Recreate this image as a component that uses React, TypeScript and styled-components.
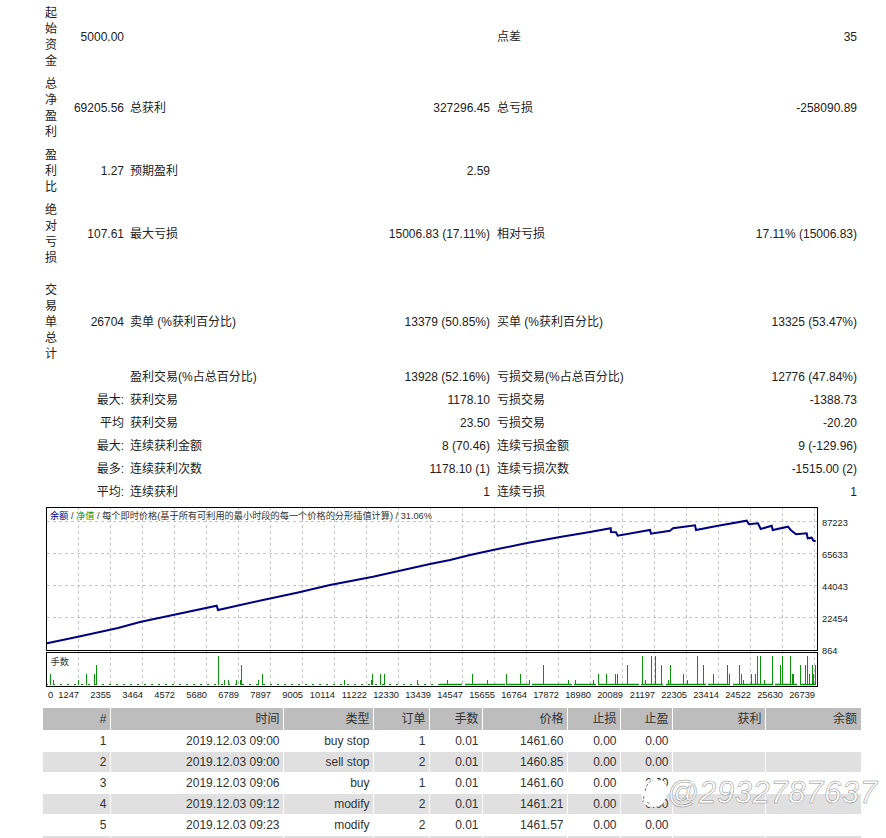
import React from 'react';
import styled, { createGlobalStyle } from 'styled-components';

const GlobalStyle = createGlobalStyle`
  html, body {
    margin: 0;
    padding: 0;
    height: 838px;
    overflow: hidden;
    background: #fff;
  }
`;

const Page = styled.div`
  position: relative;
  width: 886px;
  height: 838px;
  overflow: hidden;
  padding: 1px 0 0 43px;
  box-sizing: border-box;
  font-family: "Liberation Sans", "Noto Sans CJK SC", sans-serif;
  font-size: 12px;
  line-height: 16px;
  color: #222;
`;

// stats block on top
const StatsTable = styled.table`
  width: 818px;
  table-layout: fixed;
  border-collapse: collapse;
`;

const Caption = styled.td`
  padding: 4px 0 3px 2px;
  vertical-align: middle;
  word-break: break-all;
`;

const StatLabel = styled.td`
  padding: 4px 0 3px 3px;
  white-space: nowrap;
  vertical-align: middle;
`;

const StatValue = styled.td<{ $inset: number }>`
  padding: 4px ${p => p.$inset}px 3px 0;
  text-align: right;
  white-space: nowrap;
  vertical-align: middle;
`;

const Spacer = styled.tr`
  height: 9px;
`;

const ChartFrame = styled.div`
  margin: 2px 0 3px 3px;
  height: 200px;
`;

const ChartSvg = styled.svg`
  display: block;
  width: 840px;
  height: 200px;
`;

const AxisText = styled.text`
  font-family: "Liberation Sans", "Noto Sans CJK SC", sans-serif;
  font-size: 9.3px;
  fill: #222;
`;

const LegendText = styled.text`
  font-family: "Liberation Sans", "Noto Sans CJK SC", sans-serif;
  font-size: 9.2px;
  fill: #333;
`;

// deal list
const DealTable = styled.table`
  width: 818px;
  table-layout: fixed;
  border-collapse: collapse;
`;

const HeadCell = styled.th`
  height: 22px;
  padding: 0 3px 0 0;
  background: #bdbdbd;
  border-right: 1px solid #fff;
  border-bottom: 1px solid #fff;
  font-weight: normal;
  text-align: right;
  color: #333;
  &:last-child { border-right: 0; padding-right: 4px; }
`;

const DealRow = styled.tr<{ $shade: boolean }>`
  background: ${p => (p.$shade ? '#e0e0e0' : '#fff')};
`;

const DealCell = styled.td`
  height: 20px;
  padding: 0 3px 0 0;
  border-right: 1px solid #fff;
  border-bottom: 1px solid #fff;
  text-align: right;
  color: #333;
  &:last-child { border-right: 0; }
`;

const Watermark = styled.div`
  position: absolute;
  left: 641px;
  top: 776px;
  display: flex;
  align-items: center;
`;

const WatermarkText = styled.span`
  font-family: "Liberation Sans", sans-serif;
  font-size: 31px;
  line-height: 34px;
  font-style: italic;
  letter-spacing: 0.6px;
  color: #fff;
  -webkit-text-stroke: 0.5px #8a8a8a;
`;

const statCols = [20, 64, 140, 227, 140, 227];
const dealCols = [67, 173, 90, 56, 53, 85, 53, 52, 93, 96];
const dealHead = ['#', '时间', '类型', '订单', '手数', '价格', '止损', '止盈', '获利', '余额'];

const deals = [
  ['1', '2019.12.03 09:00', 'buy stop', '1', '0.01', '1461.60', '0.00', '0.00', '', ''],
  ['2', '2019.12.03 09:00', 'sell stop', '2', '0.01', '1460.85', '0.00', '0.00', '', ''],
  ['3', '2019.12.03 09:06', 'buy', '1', '0.01', '1461.60', '0.00', '0.00', '', ''],
  ['4', '2019.12.03 09:12', 'modify', '2', '0.01', '1461.21', '0.00', '0.00', '', ''],
  ['5', '2019.12.03 09:23', 'modify', '2', '0.01', '1461.57', '0.00', '0.00', '', ''],
  ['', '', '', '', '', '', '', '', '', ''],
];

const topRows = [
  ['起始资金', '5000.00', '', '', '点差', '35'],
  ['总净盈利', '69205.56', '总获利', '327296.45', '总亏损', '-258090.89'],
  ['盈利比', '1.27', '预期盈利', '2.59', '', ''],
  ['绝对亏损', '107.61', '最大亏损', '15006.83 (17.11%)', '相对亏损', '17.11% (15006.83)'],
];

const lowerRows = [
  ['', '盈利交易(%占总百分比)', '13928 (52.16%)', '亏损交易(%占总百分比)', '12776 (47.84%)'],
  ['最大:', '获利交易', '1178.10', '亏损交易', '-1388.73'],
  ['平均', '获利交易', '23.50', '亏损交易', '-20.20'],
  ['最大:', '连续获利金额', '8 (70.46)', '连续亏损金额', '9 (-129.96)'],
  ['最多:', '连续获利次数', '1178.10 (1)', '连续亏损次数', '-1515.00 (2)'],
  ['平均:', '连续获利', '1', '连续亏损', '1'],
];

// chart coordinates below are page x, and y relative to the svg (page y - 505)
const OX = 46;
const OY = 505;

const balance: [number, number][] = [
  [47, 643.3], [78, 636.7], [118, 628], [140, 622], [173, 615], [216.7, 605.7], [218, 610],
  [263, 600], [297, 592.7], [330, 585], [373, 576.7], [430, 564], [450, 560], [470, 555],
  [493, 550], [527, 543], [560, 537], [590, 532], [610.7, 528.3], [611, 532], [616, 532.3],
  [617.7, 535.7], [650, 530], [651, 533.7], [670, 530.7], [673, 528.3], [695, 525.3], [696, 530],
  [716.7, 526], [746.7, 520.7], [749, 524.3], [758, 523.3], [760.7, 529], [771.7, 525.7],
  [772.7, 530], [788, 526.7], [790.7, 530], [796, 534.3], [806.7, 533.3], [807.7, 538.3],
  [811.7, 537.7], [813.3, 540.7], [815.7, 541.3],
];

// [page x, top y of the bar]
const lots: [number, number][] = [
  [50, 674], [53, 680], [78, 680], [86, 674], [94, 674], [96, 665], [218, 656], [224, 680], [228, 680],
  [236, 680], [240, 680], [241, 665], [258, 680], [262, 674], [344, 680], [371, 680], [371.5, 674], [380, 674],
  [384, 674], [417, 680], [447, 680],
  [472, 674], [487, 680], [506, 674], [520, 674], [529, 680], [543, 665], [568, 680], [575, 680], [593, 680],
  [598, 674], [606, 674], [615, 674], [617, 674], [627, 665], [642, 656], [645, 680], [651, 656], [655, 656],
  [661, 665], [668, 680], [670, 665], [683, 674], [687, 680], [697, 656], [703, 665], [713, 674], [727, 665],
  [729, 674], [739, 665], [741, 674], [743, 680], [751, 674], [755, 674], [757, 656], [760, 656], [764, 680],
  [772, 656], [780, 665], [782, 656], [790, 656], [792, 674], [793, 674], [800, 665], [805, 665], [807, 656],
  [809, 674], [812, 665], [813, 674], [814.5, 665],
];

const xLabels = ['1247', '2355', '3464', '4572', '5680', '6789', '7897', '9005', '10114', '11222', '12330', '13439',
  '14547', '15655', '16764', '17872', '18980', '20089', '21197', '22305', '23414', '24522', '25630', '26739'];

const yLabels = [['87223', 525.5], ['65633', 557.5], ['44043', 589.5], ['22454', 621.5], ['864', 653.5]] as const;

const gridX = Array.from({ length: 24 }, (_, i) => 46.5 + 32 * (i + 1));
const gridY = [521.5, 553.5, 585.5, 617.5];

const EquityChart = () => {
  const y = (v: number) => v - OY;
  const x = (v: number) => v - OX;
  return (
    <ChartSvg viewBox="0 0 840 200">
      {gridX.map(g => (
        <line key={g} x1={x(g)} x2={x(g)} y1={2} y2={181} stroke="#c4c4c4" strokeDasharray="3 3" />
      ))}
      {gridY.map(g => (
        <line key={g} x1={1} x2={771} y1={y(g)} y2={y(g)} stroke="#c4c4c4" strokeDasharray="3 3" />
      ))}
      <polyline
        points={balance.map(([a, b]) => `${x(a)},${y(b)}`).join(' ')}
        fill="none"
        stroke="#000080"
        strokeWidth={2}
      />
      <line x1={x(46)} x2={x(440)} y1={179.5} y2={179.5} stroke="#0a8f0a" strokeDasharray="2 5" />
      <line x1={x(440)} x2={x(815)} y1={179.5} y2={179.5} stroke="#0a8f0a" strokeWidth={1.4} strokeDasharray="22 3 40 2" />
      {lots.map(([a, top], i) => (
        <line key={i} x1={Math.round(x(a)) + 0.5} x2={Math.round(x(a)) + 0.5} y1={y(top)} y2={180} stroke="#0a930a" />
      ))}
      <rect x={0.5} y={2.5} width={771} height={143} fill="none" stroke="#000" />
      <rect x={0.5} y={147.5} width={771} height={34} fill="none" stroke="#000" />
      <LegendText x={4} y={14}>
        <tspan fill="#000080">余额</tspan>
        <tspan> / </tspan>
        <tspan fill="#0a930a">净值</tspan>
        <tspan> / 每个即时价格(基于所有可利用的最小时段的每一个价格的分形插值计算) / 31.06%</tspan>
      </LegendText>
      <LegendText x={4.5} y={160}>手数</LegendText>
      {yLabels.map(([t, v]) => (
        <AxisText key={t} x={776} y={y(v)}>{t}</AxisText>
      ))}
      <AxisText x={2} y={192.5}>0</AxisText>
      {xLabels.map((t, i) => (
        <AxisText key={t} x={x(gridX[i]) + 0.5} y={192.5} textAnchor="end">{t}</AxisText>
      ))}
    </ChartSvg>
  );
};

const App = () => (
  <Page>
    <GlobalStyle />
    <StatsTable>
      <colgroup>
        {statCols.map((w, i) => <col key={i} width={w} />)}
      </colgroup>
      <tbody>
        {topRows.map(r => (
          <tr key={r[0]}>
            <Caption>{r[0]}</Caption>
            <StatValue $inset={3}>{r[1]}</StatValue>
            <StatLabel>{r[2]}</StatLabel>
            <StatValue $inset={4}>{r[3]}</StatValue>
            <StatLabel>{r[4]}</StatLabel>
            <StatValue $inset={4}>{r[5]}</StatValue>
          </tr>
        ))}
        <Spacer><td colSpan={6} /></Spacer>
        <tr>
          <Caption>交易单总计</Caption>
          <StatValue $inset={3}>26704</StatValue>
          <StatLabel>卖单 (%获利百分比)</StatLabel>
          <StatValue $inset={4}>13379 (50.85%)</StatValue>
          <StatLabel>买单 (%获利百分比)</StatLabel>
          <StatValue $inset={4}>13325 (53.47%)</StatValue>
        </tr>
        {lowerRows.map((r, i) => (
          <tr key={i}>
            <StatValue $inset={3} colSpan={2}>{r[0]}</StatValue>
            <StatLabel>{r[1]}</StatLabel>
            <StatValue $inset={4}>{r[2]}</StatValue>
            <StatLabel>{r[3]}</StatLabel>
            <StatValue $inset={4}>{r[4]}</StatValue>
          </tr>
        ))}
      </tbody>
    </StatsTable>
    <ChartFrame>
      <EquityChart />
    </ChartFrame>
    <DealTable>
      <colgroup>
        {dealCols.map((w, i) => <col key={i} width={w} />)}
      </colgroup>
      <thead>
        <tr>
          {dealHead.map(h => <HeadCell key={h}>{h}</HeadCell>)}
        </tr>
      </thead>
      <tbody>
        {deals.map((d, i) => (
          <DealRow key={i} $shade={i % 2 === 1}>
            {d.map((c, j) => <DealCell key={j}>{c}</DealCell>)}
          </DealRow>
        ))}
      </tbody>
    </DealTable>
    <Watermark>
      <svg width="26" height="30" viewBox="0 0 26 30">
        <path d="M5 3 C10 0 24 0 25 6 C27 14 25 24 20 27 C14 30 6 30 2 24 C-1 17 1 8 5 3 Z" fill="#fff" />
        <path d="M4 13 C5 8 8 3 12 2 M17 2 C21 1 24 2 24 6 M3 18 L2 24 M6 24 L9 26" fill="none" stroke="#555" strokeWidth="0.8" strokeDasharray="3 1.5" />
      </svg>
      <WatermarkText>@2932787637</WatermarkText>
    </Watermark>
  </Page>
);

export default App;
